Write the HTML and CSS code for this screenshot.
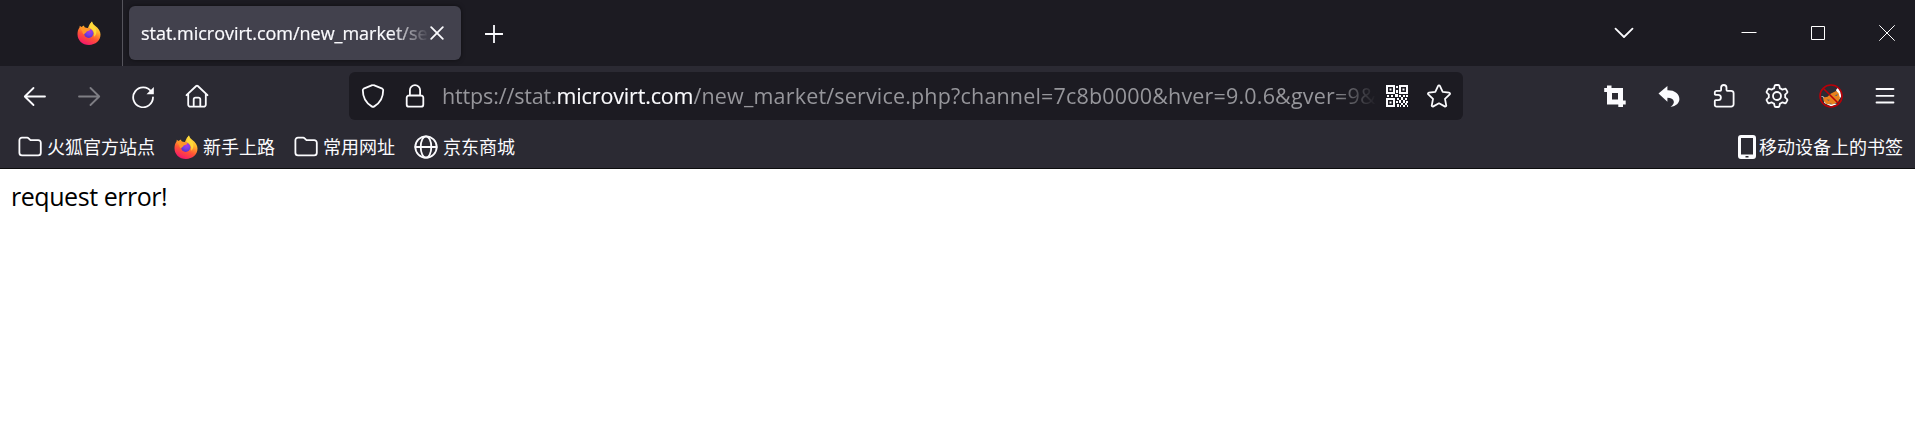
FILE: index.html
```html
<!DOCTYPE html>
<html lang="zh-CN">
<head>
<meta charset="utf-8">
<title>stat.microvirt.com</title>
<link rel="stylesheet" href="styles.css">
</head>
<body>
<svg width="0" height="0" class="defs">
  <defs>
    <linearGradient id="flame" x1="0.8" y1="0" x2="0.35" y2="1">
      <stop offset="0" stop-color="#fff44f"/><stop offset="0.35" stop-color="#ffb52a"/><stop offset="0.65" stop-color="#ff5634"/><stop offset="1" stop-color="#f5156c"/>
    </linearGradient>
    <radialGradient id="core" cx="0.6" cy="0.3" r="0.75">
      <stop offset="0" stop-color="#b833e1"/><stop offset="0.5" stop-color="#7542e5"/><stop offset="1" stop-color="#592acb"/>
    </radialGradient>
    <symbol id="firefox" viewBox="0 0 24 24">
      <path fill="url(#flame)" d="M15 .5c.5 1.300.7 2.400 3.100 4.200 3.600 2.800 5.400 5.500 5.400 8.900C23.500 19.600 18.500 24 12 24 5.300 24 .5 19.200.5 13.200c0-2.600.6-4.900 2-6.600l.3-1.900 1.500 1.200L7 4.500l.6 2.200 3.400.4C12 4 13.500 1.800 15 .5z"/>
      <circle cx="11.700" cy="12.200" r="4.700" fill="url(#core)"/>
      <path fill="#ff9528" d="M3 7c2-1.200 4-1.300 5.600-.3l4.200.8c.9.300.5 1.500-.4 1.900l-2.700 1.200c-.4 1.300-1.800 1.500-2.600 2.900-1.100-.7-1.800-1.600-1.700-3z"/>
      <path fill="#ffd93a" d="M15 .5c.3 2 .5 3.100 2.600 5.200 2.600 2.900 2.400 7.600-.4 10 .6-4.800-1.200-7.400-4.500-8.600C12.500 4.500 13.600 2 15 .5z"/>
    </symbol>
    <symbol id="folder" viewBox="0 0 24 24">
      <path class="line" d="M4 2.700h5.200c.6 0 1 .2 1.400.6l1.900 1.900h7.700a2.600 2.600 0 0 1 2.600 2.600v9.900a2.600 2.600 0 0 1-2.600 2.600H4a2.600 2.600 0 0 1-2.600-2.600V5.300A2.600 2.600 0 0 1 4 2.700z"/>
    </symbol>
  </defs>
</svg>
<header class="tabs">
  <div class="pinned"><svg class="icon"><use href="#firefox"/></svg></div>
  <div class="tab">
    <span class="tab-title">stat.microvirt.com/new_market/se</span>
    <svg class="tab-close" viewBox="0 0 14 14"><path class="line" d="M1.200 1.200l11.600 11.600M12.800 1.200L1.200 12.800"/></svg>
  </div>
  <div class="new-tab"><svg viewBox="0 0 18 18" width="18" height="18"><path class="line" d="M9 .3v17.400M.3 9h17.400"/></svg></div>
  <div class="all-tabs"><svg viewBox="0 0 20 12" width="20" height="12"><path class="line" d="M1.500 1.700L10 10l8.500-8.300"/></svg></div>
  <div class="win"><svg viewBox="0 0 16 16" width="16" height="16"><path class="thin" d="M.5 7.500h15"/></svg></div>
  <div class="win"><svg viewBox="0 0 16 16" width="16" height="16"><path class="thin" d="M1.500 1.500h13v13h-13z"/></svg></div>
  <div class="win"><svg viewBox="0 0 16 16" width="16" height="16"><path class="thin" d="M.3.3l15.400 15.400M15.700.3L.3 15.700"/></svg></div>
</header>
<nav class="toolbar">
  <div class="group nav">
    <div class="btn"><svg class="icon" viewBox="0 0 24 24"><path class="line" d="M22 12.500H2.200M10.500 4l-8.700 8.500 8.700 8.500"/></svg></div>
    <div class="btn dim"><svg class="icon" viewBox="0 0 24 24"><path class="line" d="M2 12.500h19.800M13.500 4l8.700 8.500-8.700 8.500"/></svg></div>
    <div class="btn"><svg class="icon" viewBox="0 0 24 24"><path class="line" d="M20.300 7.800A9.900 9.900 0 1 0 22 13.300"/><path class="solid" d="M22.800 3v7.200h-7.300z"/></svg></div>
    <div class="btn"><svg class="icon" viewBox="0 0 24 24"><path class="line" d="M1.500 11.200L11.200 2a1.200 1.200 0 0 1 1.600 0l9.700 9.200M3.200 10v10.500a2.200 2.200 0 0 0 2.200 2.200h13.200a2.200 2.200 0 0 0 2.200-2.200V10M8.700 22.500v-7a1.800 1.800 0 0 1 1.800-1.800h3a1.800 1.800 0 0 1 1.800 1.800v7"/></svg></div>
  </div>
  <div class="urlbar">
    <svg class="icon shield" viewBox="0 0 24 24"><path class="line" d="M11.300 1.200a1.700 1.700 0 0 1 1.400 0l8.600 3.500c.6.300.9.800.9 1.400 0 7-2.300 12.500-8.900 16.300a2.600 2.600 0 0 1-2.600 0C4.100 18.600 1.800 13.100 1.800 6.100c0-.6.300-1.100.9-1.400z"/></svg>
    <svg class="icon lock" viewBox="0 0 24 24"><path class="line" d="M6.900 11.500V6.300a5.100 5.100 0 0 1 10.200 0v5.200M6 11.500h12a2.300 2.300 0 0 1 2.300 2.300v6.600a2.300 2.300 0 0 1-2.300 2.300H6a2.300 2.300 0 0 1-2.300-2.300v-6.600A2.300 2.300 0 0 1 6 11.500z"/></svg>
    <div class="url"><span class="scheme">https://stat.</span><span class="host">microvirt.com</span><span class="path">/new_market/service.php?channel=7c8b0000&amp;hver=9.0.6&amp;gver=9&amp;v</span></div>
    <svg class="qr" viewBox="0 0 22 22"><path class="solid" fill-rule="evenodd" d="M0 0h9v9H0zM2 2v5h5V2zM3.500 3.500h2v2h-2zM13 0h9v9h-9zM15 2v5h5V2zM16.500 3.500h2v2h-2zM0 13h9v9H0zM2 15v5h5v-5zM3.500 16.500h2v2h-2zM10 1h2v2h-2zM10 5h2v3h-2zM1 10h2v2H1zM5 10h2v2H5zM9 9h3v3H9zM13 10h2v2h-2zM17 10h2v2h-2zM20 10h2v2h-2zM11 13h2v2h-2zM15 12h2v3h-2zM19 13h2v2h-2zM10 16h2v2h-2zM13 15h2v3h-2zM17 15h2v3h-2zM20 16h2v2h-2zM11 19h2v3h-2zM15 18h2v2h-2zM19 18h2v2h-2zM17 20h2v2h-2zM14 20h1v2h-1zM21 20h1v2h-1z"/></svg>
    <svg class="icon" viewBox="0 0 24 24"><path class="line" d="M11.100 1.900a1 1 0 0 1 1.800 0l2.800 5.900 6.400.8a1 1 0 0 1 .6 1.700L18 14.800l1.200 6.500a1 1 0 0 1-1.500 1.100L12 19.300l-5.700 3.100a1 1 0 0 1-1.500-1.100L6 14.800l-4.700-4.500a1 1 0 0 1 .6-1.700l6.400-.8z"/></svg>
  </div>
  <div class="group actions">
    <div class="btn"><svg class="icon" viewBox="0 0 24 24"><path class="solid" fill-rule="evenodd" d="M4 1.500h4.500V4H20v12.500h2.700v4H20V23h-4.700v-2.500H4V8H1.200V4H4zM9 9v6.500h6V9z"/></svg></div>
    <div class="btn"><svg class="icon" viewBox="0 0 24 24"><path class="solid" d="M1.500 9.500L10.400 2v4.200C17.500 6 22.400 9.500 22.400 15c0 4-3.200 7.200-8.900 7.800 5.400-3 4.400-9-3.100-9v4z"/></svg></div>
    <div class="btn"><svg class="icon puzzle" viewBox="0 0 24 24"><path class="line" d="M2.800 8.500A1.700 1.700 0 0 1 4.500 6.800h3.700c.6 0 .9-.3.900-.9V3.700a2.700 2.700 0 0 1 5.400 0v2.200c0 .6.300.9.900.9h3.800A2.400 2.400 0 0 1 21.600 9.200v11a2.400 2.400 0 0 1-2.400 2.400H4.500a1.700 1.700 0 0 1-1.700-1.700v-3.800c0-.6.300-.9.900-.9h2.500a2.700 2.700 0 0 0 0-5.400H3.700c-.6 0-.9-.3-.9-.9z"/></svg></div>
    <div class="btn"><svg class="icon" viewBox="0 0 24 24"><circle class="line" cx="12" cy="12" r="4"/><path class="line" d="M10.700 1h2.600c.6 0 1 .4 1.100.9l.5 2.400c1.200.5 1.300.5 2.300 1.300l2.500-.8c.5-.2 1 0 1.300.5l1.200 2.100c.3.500.2 1.100-.2 1.500L20.100 10.600c.2 1.200.2 1.600 0 2.800l1.900 1.700c.4.400.5 1 .2 1.500L21 18.700c-.3.500-.8.700-1.300.5l-2.500-.8c-1 .8-1.100.8-2.300 1.300l-.5 2.400c-.1.500-.5.900-1.100.9h-2.600c-.6 0-1-.4-1.100-.9l-.5-2.400c-1.200-.5-1.300-.5-2.300-1.300l-2.500.8c-.5.200-1 0-1.300-.5l-1.200-2.100c-.3-.5-.2-1.100.2-1.500l1.900-1.700c-.2-1.200-.2-1.600 0-2.800L2 8.900c-.4-.4-.5-1-.2-1.500L3 5.300c.3-.5.8-.7 1.300-.5l2.500.8c1-.8 1.100-.8 2.300-1.300l.5-2.400c.1-.5.5-.9 1.100-.9z"/></svg></div>
    <div class="btn"><svg class="icon" viewBox="0 0 24 24"><path fill="#fff" d="M1.500 12l3 1.500.8 5.500 7 3.500 6-2.500-8-1.500-6-6zM17 6l2-2.500 2.500 4 .8 5-2.300 3z"/><path fill="#e8821d" d="M4.500 13.500l4-.8 3-3L17 7l2.500 2 1.500 5-2 4-5.500 2.500-6-.5-2.800-3z"/><path fill="#5a6472" d="M7.500 15.500l3.500.2-1.500 1.300zM15.500 11.500l3.500-1.500-1.200 2zM10 20l2-.8 1 1.300z"/><circle cx="12" cy="12" r="11" fill="none" stroke="#b90008" stroke-width="1.600"/><path d="M4.200 4.200l15.600 15.600" stroke="#b90008" stroke-width="1.600"/></svg></div>
    <div class="btn"><svg class="icon" viewBox="0 0 24 24"><path class="line" d="M3.500 5h17M3.500 11.800h17M3.500 18.500h17"/></svg></div>
  </div>
</nav>
<nav class="bookmarks">
  <div class="bm"><svg class="icon"><use href="#folder"/></svg><span>火狐官方站点</span></div>
  <div class="bm"><svg class="icon"><use href="#firefox"/></svg><span>新手上路</span></div>
  <div class="bm"><svg class="icon"><use href="#folder"/></svg><span>常用网址</span></div>
  <div class="bm"><svg class="icon" viewBox="0 0 24 24"><circle class="line" cx="12" cy="12" r="10.700"/><ellipse class="line" cx="12" cy="12" rx="5.300" ry="10.700"/><path class="line" d="M1.300 12h21.400"/></svg><span>京东商城</span></div>
  <div class="bm mobile"><svg viewBox="0 0 18 24" width="18" height="24"><path class="solid" fill-rule="evenodd" d="M3 0h12a3 3 0 0 1 3 3v18a3 3 0 0 1-3 3H3a3 3 0 0 1-3-3V3a3 3 0 0 1 3-3zM3 3v16.500h12V3zM7.500 21v1.500h3V21z"/></svg><span>移动设备上的书签</span></div>
</nav>
<main class="page"><span class="message">request error!</span></main>
</body>
</html>
```
FILE: styles.css
```css
* { box-sizing: border-box; }
body {
  margin: 0;
  height: 440px;
  overflow: hidden;
  background: #fff;
  color: #fbfbfe;
  font-family: "Open Sans", "Noto Sans CJK SC", sans-serif;
}
svg { display: block; flex: none; }
.defs { position: absolute; }
.icon { width: 24px; height: 24px; }
.line {
  fill: none;
  stroke: #fbfbfe;
  stroke-width: 1.8;
  stroke-linecap: round;
  stroke-linejoin: round;
}
.thin { fill: none; stroke: #fff; stroke-width: 1; }
.solid { fill: #fbfbfe; }

.tabs { display: flex; height: 66px; background: #1c1b22; }
.pinned {
  width: 123px;
  padding: 21px 0 0 77px;
  border-right: 1px solid #55545c;
}
.tab {
  display: flex;
  align-items: center;
  width: 332px;
  height: 54px;
  margin: 6px 0 0 6px;
  padding: 0 17px 0 12px;
  border-radius: 6px;
  background: #42414d;
  box-shadow: 0 0 4px rgba(0, 0, 0, 0.5);
}
.tab-title {
  flex: 1;
  white-space: nowrap;
  font-size: 18px;
  letter-spacing: -0.02px;
  -webkit-text-stroke: 0.2px currentColor;
  -webkit-mask-image: linear-gradient(to left, transparent 0, #000 38px);
  mask-image: linear-gradient(to left, transparent 0, #000 38px);
}
.tab-close { width: 14px; height: 14px; margin-left: 1px; }
.new-tab, .all-tabs, .win { display: grid; place-items: center; }
.new-tab { width: 65px; padding-top: 2px; }
.all-tabs { width: 54px; margin-left: auto; margin-right: 57px; }
.win { width: 56px; margin-left: 13px; }

.toolbar { display: flex; align-items: center; height: 60px; background: #2b2a33; }
.group { display: flex; padding-left: 8px; }
.btn { display: grid; place-items: center; width: 54px; height: 48px; }
.nav .btn:last-child { width: 53px; }
.dim { opacity: 0.4; }
.puzzle { margin-left: 1px; }
.actions { margin-left: auto; margin-right: 3px; }
.urlbar {
  display: flex;
  align-items: center;
  width: 1114px;
  height: 48px;
  margin-left: 126px;
  padding: 0 12px;
  border-radius: 6px;
  background: #1c1b22;
}
.lock { margin-left: 18px; }
.url {
  width: 935px;
  margin-left: 15px;
  padding-bottom: 2px;
  white-space: nowrap;
  font-size: 21.5px;
  color: #96969b;
  -webkit-mask-image: linear-gradient(to left, transparent 0, #000 46px);
  mask-image: linear-gradient(to left, transparent 0, #000 46px);
}
.scheme { letter-spacing: -0.15px; }
.host { color: #fbfbfe; letter-spacing: -0.15px; -webkit-text-stroke: 0.12px currentColor; }
.path { letter-spacing: 0.18px; }
.qr { width: 22px; height: 22px; margin: 0 19px 0 9px; }

.bookmarks {
  display: flex;
  align-items: center;
  gap: 18.500px;
  height: 43px;
  padding: 0 12px 0 17.500px;
  background: #2b2a33;
  border-bottom: 1px solid #0c0c0d;
}
.bm {
  display: flex;
  align-items: center;
  gap: 5.500px;
  font: 18px/24px "Noto Sans CJK SC", sans-serif;
}
.bm span { padding-bottom: 2px; }
.bm.mobile { margin-left: auto; gap: 3px; }

.page {
  padding: 9px 11px;
  color: #000;
  font-size: 25px;
  line-height: 36px;
}
.message { letter-spacing: -0.45px; }
```
